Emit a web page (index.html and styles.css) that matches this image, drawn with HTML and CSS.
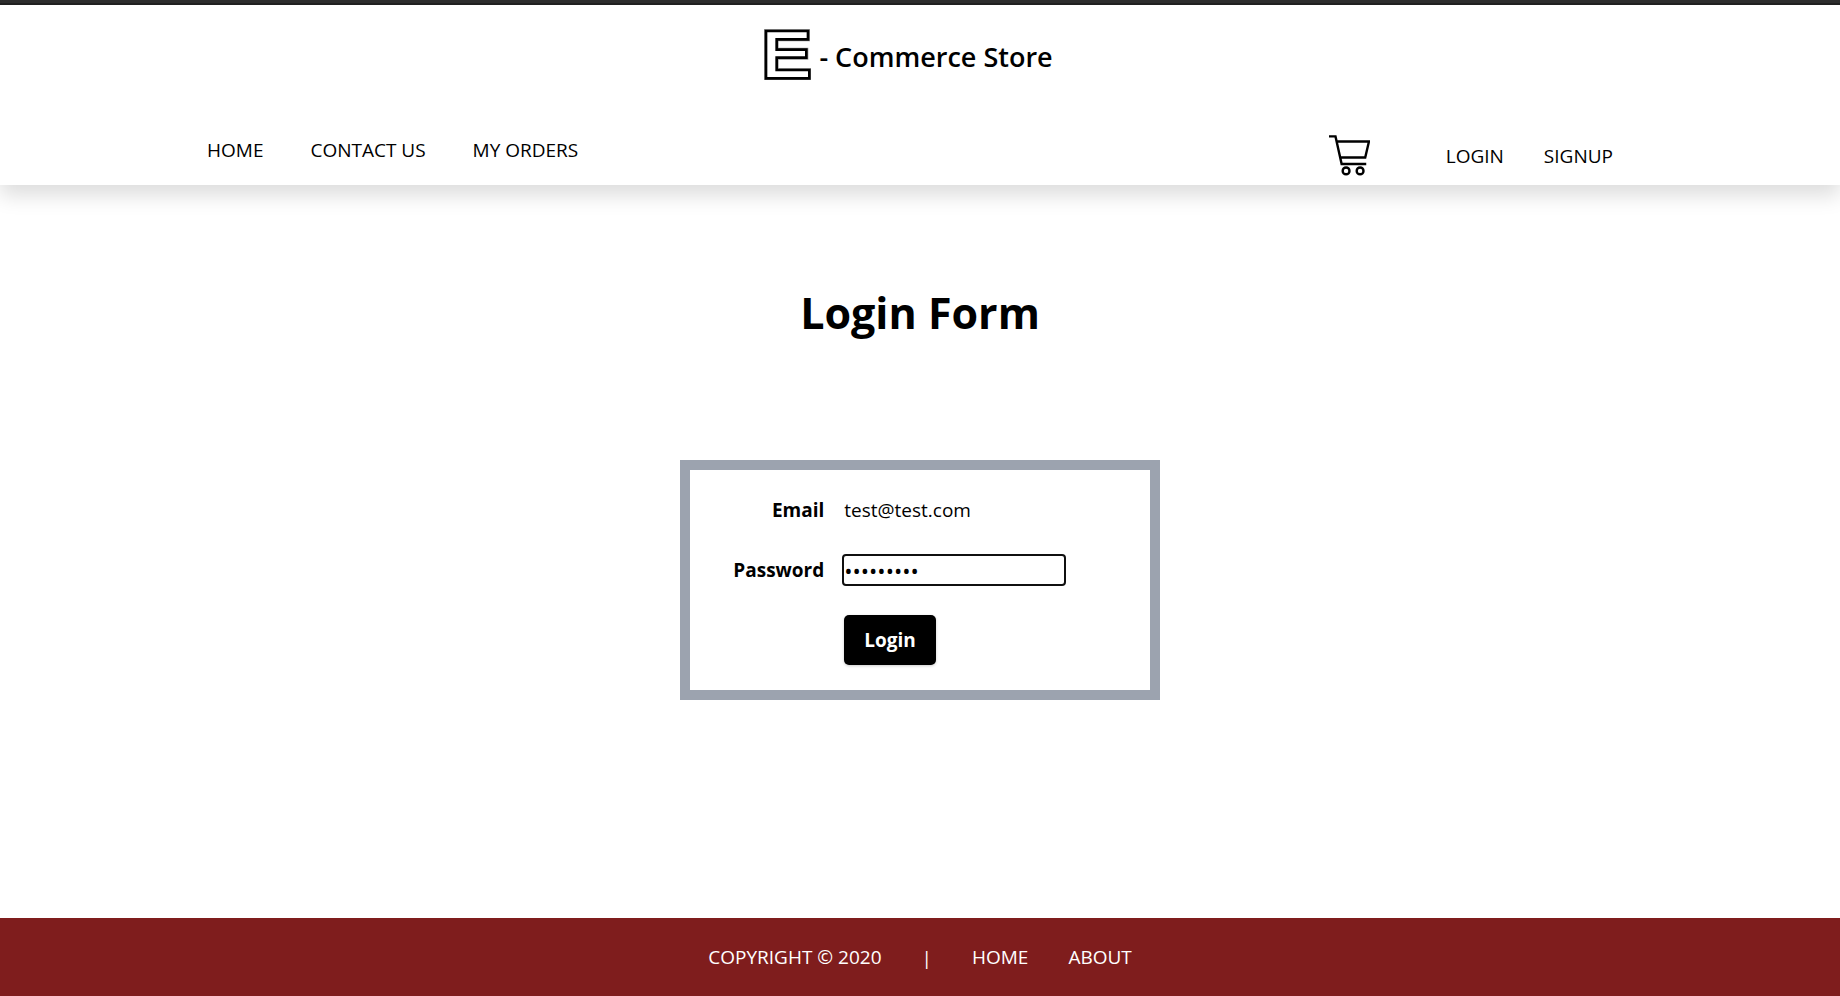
FILE: index.html
```
<!DOCTYPE html>
<html lang="en">
<head>
<meta charset="utf-8">
<title>E - Commerce Store</title>
<link rel="stylesheet" href="styles.css">
</head>
<body>
<header class="header">
  <a class="brand" href="#">
    <svg class="brand-mark" viewBox="74 88 141 153" aria-hidden="true"><path d="M80 94H206V119H112V150H201V174H112V211H210V236H80Z" fill="none" stroke="#999" stroke-width="12"/><path d="M80 94H206V119H112V150H201V174H112V211H210V236H80Z" fill="#fff" stroke="#000" stroke-width="8"/></svg>
    <span class="brand-name">- Commerce Store</span>
  </a>
  <div class="bar">
    <nav class="nav">
      <a href="#">HOME</a>
      <a href="#">CONTACT US</a>
      <a href="#">MY ORDERS</a>
    </nav>
    <div class="account">
      <a class="cart" href="#" aria-label="Cart">
        <svg class="cart-icon" viewBox="90 45 120 120" aria-hidden="true" fill="none" stroke="#000" stroke-width="7"><path d="M90 49H109L127 130H199M112 64H207L196 111H123"/><circle cx="140" cy="150" r="10"/><circle cx="181" cy="150" r="10"/></svg>
      </a>
      <a href="#">LOGIN</a>
      <a href="#">SIGNUP</a>
    </div>
  </div>
</header>
<main class="main">
  <h1 class="title">Login Form</h1>
  <form class="form">
    <label for="email">Email</label>
    <input class="field" id="email" type="email" value="test@test.com">
    <label for="password">Password</label>
    <input class="field field-active" id="password" type="password" value="password1">
    <button class="submit" type="button">Login</button>
  </form>
</main>
<footer class="footer">
  <span>COPYRIGHT © 2020</span>
  <span class="divider">|</span>
  <nav class="footer-nav">
    <a href="#">HOME</a>
    <a href="#">ABOUT</a>
  </nav>
</footer>
</body>
</html>
```
FILE: styles.css
```
* { box-sizing: border-box; }
body {
  margin: 0;
  min-height: 100vh;
  display: flex;
  flex-direction: column;
  background: #fff;
  color: #000;
  font: 400 19px/30px "Open Sans", "Noto Sans", sans-serif;
}
a { color: inherit; text-decoration: none; }
.header {
  border-top: 3px solid #2d2d2d;
  box-shadow: inset 0 2px #202020, 0 10px 20px rgba(0, 0, 0, 0.14);
}
.brand {
  display: flex;
  justify-content: center;
  align-items: flex-end;
  gap: 8px;
  padding: 26px 23px 0 0;
  font-size: 27px;
  font-weight: 600;
}
.brand-mark { width: 47px; height: 51px; }
.brand-name { line-height: 46px; }
.bar {
  display: flex;
  justify-content: space-between;
  align-items: flex-start;
  padding: 55px 227px 9px 207px;
}
.nav { display: flex; gap: 47px; }
.account { display: flex; align-items: center; gap: 40px; }
.cart { display: flex; margin-right: 36px; }
.cart-icon { width: 41px; height: 41px; }
.main {
  flex: 1;
  display: flex;
  flex-direction: column;
  align-items: center;
  gap: 117px;
  padding: 98px 20px;
}
.title { margin: 0; font-size: 43px; line-height: 60px; font-weight: 700; }
.form {
  display: grid;
  grid-template-columns: 2fr 5fr;
  align-items: center;
  column-gap: 20px;
  row-gap: 30px;
  width: 480px;
  padding: 25px 20px;
  border: 10px solid #9ca3af;
}
.form label { text-align: right; font-weight: 700; }
.field {
  width: 220px;
  height: 28px;
  padding: 0;
  border: 0;
  background: #fff;
  color: #000;
  font: inherit;
}
.field-active { outline: 2px solid #101010; border-radius: 2px; font-size: 22px; }
.submit {
  grid-column: 2;
  justify-self: start;
  padding: 10px 20px;
  border: 0;
  border-radius: 5px;
  background: #000;
  color: #fff;
  font: inherit;
  font-weight: 700;
  box-shadow: 0 1px 3px rgba(0, 0, 0, 0.2);
}
.footer {
  display: flex;
  justify-content: center;
  gap: 40px;
  padding: 24px 20px;
  background: #7f1d1d;
  color: #fff;
}
.divider { padding-top: 2px; line-height: 28px; }
.footer-nav { display: flex; gap: 40px; }
```
